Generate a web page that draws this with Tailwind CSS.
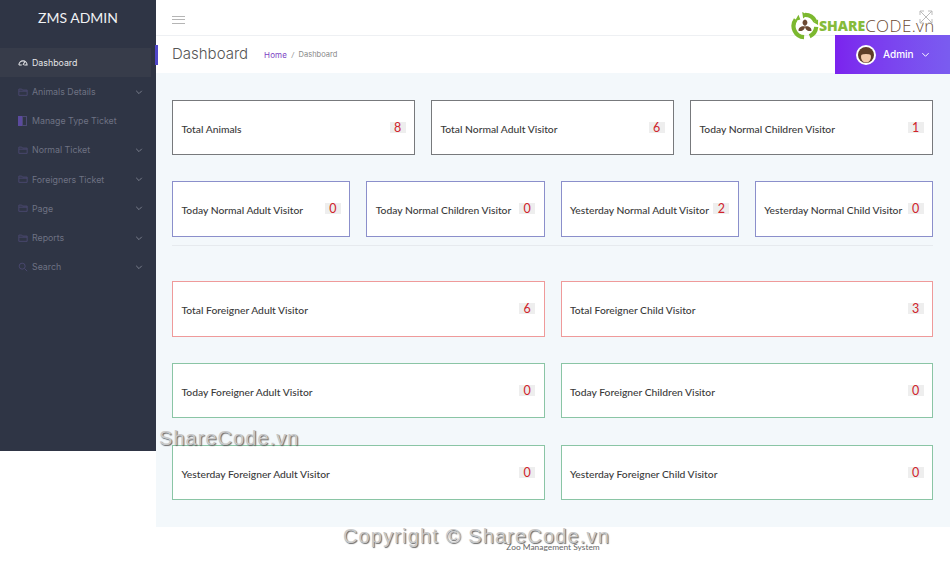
<!doctype html>
<html><head><meta charset="utf-8"><script src="https://cdn.jsdelivr.net/npm/@tailwindcss/browser@4"></script></head>
<body class="bg-white">
<div class="relative w-[950px] h-[565px] overflow-hidden bg-white font-['Lato',sans-serif] text-[#333]">
  <div class="flex items-start">
    <!-- sidebar -->
    <aside class="w-[156px] h-[451px] shrink-0 bg-[#2f3545]">
      <div class="h-[35px] flex items-center justify-center text-[14px] text-[#f0f1f3]">ZMS ADMIN</div>
      <nav class="pt-[13px] font-['Inter',sans-serif] text-[8.8px] text-[#6e7283]">
        <div class="h-[29px] w-[151px] flex items-center pl-[18px] gap-[4px] bg-[#373c4a] text-[#e4e5e8]">
          <svg class="w-[10px] h-[9px]" viewBox="0 0 12 11" fill="none" stroke="#e4e5e8" stroke-width="1.3"><path d="M1 8.500a5 5 0 0 1 10 0H7.500M4.500 8.500H1M6 8.500 8 5"/></svg><span>Dashboard</span>
        </div>
        <div class="h-[29.2px] flex items-center pl-[18px] pr-[13px] gap-[4px]"><svg class="w-[10px] h-[10px]" viewBox="0 0 12 12" fill="none" stroke="#4d4a75" stroke-width="1"><path d="M1 2.500h3.500l1 1.200H11v6.300H1zM1 5h10"/></svg><span class="flex-1">Animals Details</span><svg class="w-[8px] h-[8px]" viewBox="0 0 10 10" fill="none" stroke="#7b7f8e" stroke-width="1.2"><path d="m1.500 3.500 3.500 3.500 3.500-3.500"/></svg></div>
        <div class="h-[29.2px] flex items-center pl-[18px] pr-[13px] gap-[4px]"><span class="flex w-[9px] h-[10px] mr-[1px]"><span class="w-[4px] bg-[#5b4a9e]"></span><span class="w-[5px] border border-[#4d4a75]"></span></span><span class="flex-1">Manage Type Ticket</span></div>
        <div class="h-[29.2px] flex items-center pl-[18px] pr-[13px] gap-[4px]"><svg class="w-[10px] h-[10px]" viewBox="0 0 12 12" fill="none" stroke="#4d4a75" stroke-width="1"><path d="M1 2.500h3.500l1 1.200H11v6.300H1zM1 5h10"/></svg><span class="flex-1">Normal Ticket</span><svg class="w-[8px] h-[8px]" viewBox="0 0 10 10" fill="none" stroke="#7b7f8e" stroke-width="1.2"><path d="m1.500 3.500 3.500 3.500 3.500-3.500"/></svg></div>
        <div class="h-[29.2px] flex items-center pl-[18px] pr-[13px] gap-[4px]"><svg class="w-[10px] h-[10px]" viewBox="0 0 12 12" fill="none" stroke="#4d4a75" stroke-width="1"><path d="M1 2.500h3.500l1 1.200H11v6.300H1zM1 5h10"/></svg><span class="flex-1">Foreigners Ticket</span><svg class="w-[8px] h-[8px]" viewBox="0 0 10 10" fill="none" stroke="#7b7f8e" stroke-width="1.2"><path d="m1.500 3.500 3.500 3.500 3.500-3.500"/></svg></div>
        <div class="h-[29.2px] flex items-center pl-[18px] pr-[13px] gap-[4px]"><svg class="w-[10px] h-[10px]" viewBox="0 0 12 12" fill="none" stroke="#4d4a75" stroke-width="1"><path d="M1 2.500h3.500l1 1.200H11v6.300H1zM1 5h10"/></svg><span class="flex-1">Page</span><svg class="w-[8px] h-[8px]" viewBox="0 0 10 10" fill="none" stroke="#7b7f8e" stroke-width="1.2"><path d="m1.500 3.500 3.500 3.500 3.500-3.500"/></svg></div>
        <div class="h-[29.2px] flex items-center pl-[18px] pr-[13px] gap-[4px]"><svg class="w-[10px] h-[10px]" viewBox="0 0 12 12" fill="none" stroke="#4d4a75" stroke-width="1"><path d="M1 2.500h3.500l1 1.200H11v6.300H1zM1 5h10"/></svg><span class="flex-1">Reports</span><svg class="w-[8px] h-[8px]" viewBox="0 0 10 10" fill="none" stroke="#7b7f8e" stroke-width="1.2"><path d="m1.500 3.500 3.500 3.500 3.500-3.500"/></svg></div>
        <div class="h-[29.2px] flex items-center pl-[18px] pr-[13px] gap-[4px]"><svg class="w-[10px] h-[10px]" viewBox="0 0 12 12" fill="none" stroke="#4d4a75" stroke-width="1"><circle cx="5" cy="5" r="3.600"/><path d="m8 8 3 3"/></svg><span class="flex-1">Search</span><svg class="w-[8px] h-[8px]" viewBox="0 0 10 10" fill="none" stroke="#7b7f8e" stroke-width="1.2"><path d="m1.500 3.500 3.500 3.500 3.500-3.500"/></svg></div>
      </nav>
    </aside>
    <!-- right -->
    <div class="flex-1 min-w-0">
      <div class="h-[35px] flex items-center pl-[16px] pt-[4px] bg-white">
        <div class="w-[13px] h-[8px] border-y border-[#b5b5b5] flex items-center"><div class="w-full h-px bg-[#b5b5b5]"></div></div>
      </div>
      <div class="h-[38px] flex items-stretch border-t border-[#eef0f3] bg-white relative">
        <div class="w-[3px] h-[20px] mt-[9px] -ml-[1px] mr-[14px] bg-[#4f46c8]"></div>
        <div class="flex items-center flex-1">
          <span class="font-['Inter',sans-serif] font-light text-[15px] text-[#555]">Dashboard</span>
          <span class="ml-[16px] font-['Inter',sans-serif] text-[8px] tracking-[0.1px] text-[#7c3fc4]">Home</span>
          <span class="mx-[4px] text-[8px] text-[#888]">/</span>
          <span class="font-['Inter',sans-serif] text-[7.5px] text-[#888]">Dashboard</span>
        </div>
        <div class="w-[115px] -mt-px h-[39px] flex items-center pl-[21px] gap-[7px] bg-gradient-to-r from-[#7b22ee] to-[#7a5cf0] text-white">
          <svg class="w-[20px] h-[20px]" viewBox="0 0 20 20"><circle cx="10" cy="10" r="10" fill="#fff"/><circle cx="10" cy="10" r="8" fill="#5e3d28"/><ellipse cx="10" cy="12" rx="5" ry="5.500" fill="#f3c9ab"/><path d="M4.500 10C4.500 4.500 15.500 4.500 15.500 10 12 8.500 8 8.500 4.500 10z" fill="#5e3d28"/></svg>
          <span class="font-['Inter',sans-serif] font-medium text-[10px]">Admin</span>
          <svg class="w-[9px] h-[9px]" viewBox="0 0 10 10" fill="none" stroke="#fff" stroke-width="1.1"><path d="m1.500 3.500 3.500 3.500 3.500-3.500"/></svg>
        </div>
      </div>
      <main class="h-[454px] bg-[#f3f8fb] pt-[27px] pl-[16px] pr-[17px] text-[10.3px] font-medium text-[#3a3a3a]">
        <div class="grid grid-cols-3 gap-x-[16px] h-[55px]">
          <div class="flex items-center justify-between whitespace-nowrap pl-[8.5px] pr-[8.5px] bg-white border border-[#77797c]"><span class="pt-[4px]">Total Animals</span><span class="w-[16px] text-center bg-[#eeeeee] text-[12.5px] font-normal text-[#d0232b] leading-[11px]">8</span></div>
          <div class="flex items-center justify-between whitespace-nowrap pl-[8.5px] pr-[8.5px] bg-white border border-[#77797c]"><span class="pt-[4px]">Total Normal Adult Visitor</span><span class="w-[16px] text-center bg-[#eeeeee] text-[12.5px] font-normal text-[#d0232b] leading-[11px]">6</span></div>
          <div class="flex items-center justify-between whitespace-nowrap pl-[8.5px] pr-[8.5px] bg-white border border-[#77797c]"><span class="pt-[4px]">Today Normal Children Visitor</span><span class="w-[16px] text-center bg-[#eeeeee] text-[12.5px] font-normal text-[#d0232b] leading-[11px]">1</span></div>
        </div>
        <div class="grid grid-cols-4 gap-x-[16px] h-[55.5px] mt-[26px]">
          <div class="flex items-center justify-between whitespace-nowrap pl-[8.5px] pr-[8.5px] bg-white border border-[#8b8fcb]"><span class="pt-[4px]">Today Normal Adult Visitor</span><span class="w-[16px] text-center bg-[#eeeeee] text-[12.5px] font-normal text-[#d0232b] leading-[11px]">0</span></div>
          <div class="flex items-center justify-between whitespace-nowrap pl-[8.5px] pr-[8.5px] bg-white border border-[#8b8fcb]"><span class="pt-[4px]">Today Normal Children Visitor</span><span class="w-[16px] text-center bg-[#eeeeee] text-[12.5px] font-normal text-[#d0232b] leading-[11px]">0</span></div>
          <div class="flex items-center justify-between whitespace-nowrap pl-[8.5px] pr-[8.5px] bg-white border border-[#8b8fcb]"><span class="pt-[4px]">Yesterday Normal Adult Visitor</span><span class="w-[16px] text-center bg-[#eeeeee] text-[12.5px] font-normal text-[#d0232b] leading-[11px]">2</span></div>
          <div class="flex items-center justify-between whitespace-nowrap pl-[8.5px] pr-[8.5px] bg-white border border-[#8b8fcb]"><span class="pt-[4px]">Yesterday Normal Child Visitor</span><span class="w-[16px] text-center bg-[#eeeeee] text-[12.5px] font-normal text-[#d0232b] leading-[11px]">0</span></div>
        </div>
        <div class="h-px mt-[8px] bg-[#e6eaee]"></div>
        <div class="grid grid-cols-2 gap-x-[16px] h-[55.5px] mt-[35.5px]">
          <div class="flex items-center justify-between whitespace-nowrap pl-[8.5px] pr-[8.5px] bg-white border border-[#ef9a9a]"><span class="pt-[4px]">Total Foreigner Adult Visitor</span><span class="w-[16px] text-center bg-[#eeeeee] text-[12.5px] font-normal text-[#d0232b] leading-[11px]">6</span></div>
          <div class="flex items-center justify-between whitespace-nowrap pl-[8.5px] pr-[8.5px] bg-white border border-[#ef9a9a]"><span class="pt-[4px]">Total Foreigner Child Visitor</span><span class="w-[16px] text-center bg-[#eeeeee] text-[12.5px] font-normal text-[#d0232b] leading-[11px]">3</span></div>
        </div>
        <div class="grid grid-cols-2 gap-x-[16px] h-[55.5px] mt-[26px]">
          <div class="flex items-center justify-between whitespace-nowrap pl-[8.5px] pr-[8.5px] bg-white border border-[#8ac5a5]"><span class="pt-[4px]">Today Foreigner Adult Visitor</span><span class="w-[16px] text-center bg-[#eeeeee] text-[12.5px] font-normal text-[#d0232b] leading-[11px]">0</span></div>
          <div class="flex items-center justify-between whitespace-nowrap pl-[8.5px] pr-[8.5px] bg-white border border-[#8ac5a5]"><span class="pt-[4px]">Today Foreigner Children Visitor</span><span class="w-[16px] text-center bg-[#eeeeee] text-[12.5px] font-normal text-[#d0232b] leading-[11px]">0</span></div>
        </div>
        <div class="grid grid-cols-2 gap-x-[16px] h-[55.5px] mt-[26.5px]">
          <div class="flex items-center justify-between whitespace-nowrap pl-[8.5px] pr-[8.5px] bg-white border border-[#8ac5a5]"><span class="pt-[4px]">Yesterday Foreigner Adult Visitor</span><span class="w-[16px] text-center bg-[#eeeeee] text-[12.5px] font-normal text-[#d0232b] leading-[11px]">0</span></div>
          <div class="flex items-center justify-between whitespace-nowrap pl-[8.5px] pr-[8.5px] bg-white border border-[#8ac5a5]"><span class="pt-[4px]">Yesterday Foreigner Child Visitor</span><span class="w-[16px] text-center bg-[#eeeeee] text-[12.5px] font-normal text-[#d0232b] leading-[11px]">0</span></div>
        </div>
      </main>
      <footer class="pt-[14px] text-center text-[8.4px] text-[#666]">Zoo Management System</footer>
    </div>
  </div>
  <!-- watermarks -->
  <div class="absolute left-[159px] top-[423px] font-['Liberation_Sans',sans-serif] text-[20px] tracking-[1.05px] text-[#c9c9c9] [text-shadow:1px_1px_1px_#666]">ShareCode.vn</div>
  <div class="absolute left-[343px] top-[521px] font-['Liberation_Sans',sans-serif] text-[20px] tracking-[1.15px] text-[#c9c9c9] [text-shadow:1px_1px_1px_#666]">Copyright © ShareCode.vn</div>
  <div class="absolute left-[791px] top-[11px] flex items-center h-[29px]">
    <svg class="w-[28px] h-[28px]" viewBox="0 0 30 30"><g fill="none" stroke="#7cb82f" stroke-width="4.500"><path d="M15 3a12 12 0 0 1 11 7"/><path d="M27 16a12 12 0 0 1-7 10"/><path d="M14 27A12 12 0 0 1 5 8"/></g><path d="m12 0 6 3-5 4zM24 11l5-3 0 6zM8 3l2 5-6 2z" fill="#7cb82f"/><path d="M15 8c3.500 1.500 3.500 5 0 7-3.500-2-3.500-5.500 0-7zM8 20c0-3.500 3.500-5.500 7-4.500 0 3.500-3.500 6-7 4.500zM22 20c0-3.500-3.500-5.500-7-4.500 0 3.500 3.500 6 7 4.500z" fill="#6b4a33"/></svg>
    <span class="font-['Open_Sans',sans-serif] text-[14px] font-extrabold text-[#86bb3a] leading-none">SHARE</span><span class="font-['Open_Sans',sans-serif] font-light text-[17px] tracking-[0.4px] text-[#6b4a33] leading-none">CODE.vn</span>
  </div>
  <svg class="absolute left-[919px] top-[10px] w-[14px] h-[14px]" viewBox="0 0 14 14" fill="none" stroke="#bbb" stroke-width="1"><path d="M1 1l12 12M13 1 1 13M1 5V1h4M9 1h4v4M1 9v4h4M13 9v4H9"/></svg>
</div>
</body></html>
